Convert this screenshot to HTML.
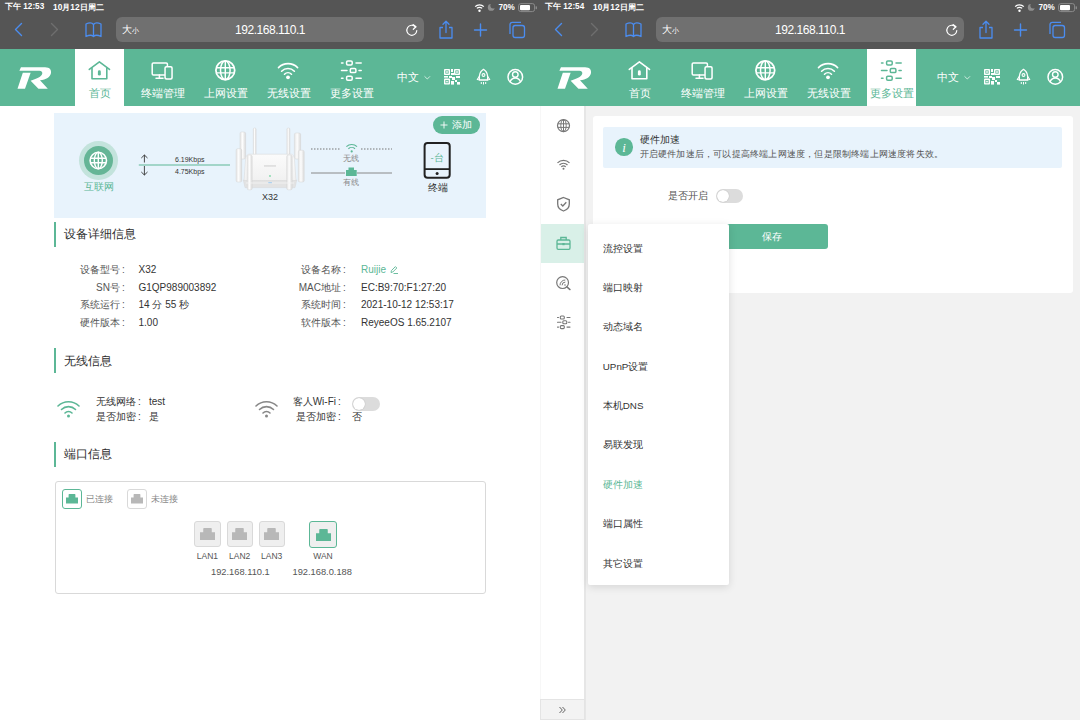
<!DOCTYPE html>
<html><head><meta charset="utf-8"><style>
.c{display:inline-block;margin-left:2px;width:4px;text-align:left}
*{margin:0;padding:0;box-sizing:border-box}
html,body{width:1080px;height:720px;overflow:hidden;background:#fff;font-family:"Liberation Sans",sans-serif}
.abs{position:absolute}
.panel{position:absolute;top:0;width:540px;height:720px;overflow:hidden;background:#fff}
.sb{position:absolute;left:0;top:0;width:540px;height:49px;background:#555555}
.st{position:absolute;font-size:8.2px;color:#fff;font-weight:bold;white-space:nowrap;line-height:10px}
.url{position:absolute;left:116px;top:17px;width:308px;height:25px;border-radius:6px;background:#707070}
.hdr{position:absolute;left:0;top:49px;width:540px;height:57px;background:#5cb796}
.hdr svg{top:6px}
.tab{position:absolute;top:0;width:49px;height:57px}
.tab.on{background:#fff}
.tab .lbl{position:absolute;left:-20px;right:-20px;top:39px;font-size:11px;line-height:11px;color:#fff;text-align:center;white-space:nowrap}
.tab.on .lbl{color:#5cb796}
.t{position:absolute;white-space:nowrap;line-height:1}
.lab{position:absolute;white-space:nowrap;line-height:1;font-size:10px;color:#555;text-align:right}
.val{position:absolute;white-space:nowrap;line-height:1;font-size:10px;color:#333}
.sec{position:absolute;left:54px;width:2px;height:25px;background:#5cb796}
.sect{position:absolute;left:64px;font-size:12.4px;line-height:1;color:#2e2e2e;white-space:nowrap}
</style></head><body>
<div class="panel" style="left:0">

<div class="sb">
  <div class="st" style="left:5px;top:2px">下午 12:53</div><div class="st" style="left:53px;top:2px;font-size:8.4px">10月12日周二</div>
  <svg class="abs" style="left:474px;top:3px" width="66" height="10" viewBox="0 0 66 10">
    <path d="M1.2,3.6 A6,6 0 0 1 9.8,3.6" stroke="#fff" stroke-width="1.3" fill="none"/>
    <path d="M2.9,5.4 A3.6,3.6 0 0 1 8.1,5.4" stroke="#fff" stroke-width="1.3" fill="none"/>
    <circle cx="5.5" cy="7.8" r="1.2" fill="#fff"/>
    <circle cx="17.2" cy="4.4" r="3.4" fill="#8f8f8f"/><circle cx="19.3" cy="2.6" r="2.9" fill="#555555"/>
  </svg>
  <div class="st" style="left:498.5px;top:3px;font-weight:bold">70%</div>
  <svg class="abs" style="left:518px;top:3px" width="20" height="10" viewBox="0 0 20 10">
    <rect x="0.6" y="0.6" width="16" height="8" rx="2.2" fill="none" stroke="#8a8a8a" stroke-width="1"/>
    <rect x="2" y="2" width="10" height="5.2" rx="1" fill="#fff"/>
    <rect x="17.6" y="3.2" width="1.4" height="3" rx="0.6" fill="#8a8a8a"/>
  </svg>
  <svg class="abs" style="left:0;top:16px" width="540" height="32" viewBox="0 0 540 32">
    <path d="M21.5,7.5 L15.5,13.5 L21.5,19.5" stroke="#4b8df0" stroke-width="1.4" fill="none" stroke-linecap="round" stroke-linejoin="round"/>
    <path d="M51.5,7.5 L57.5,13.5 L51.5,19.5" stroke="#6e6e6e" stroke-width="1.4" fill="none" stroke-linecap="round" stroke-linejoin="round"/>
    <path d="M86,8 C89,6.5 92,6.5 93.5,8.5 C95,6.5 98,6.5 101,8 L101,20.5 C98,19 95,19 93.5,20.5 C92,19 89,19 86,20.5 Z M93.5,8.5 L93.5,20.5" stroke="#4b8df0" stroke-width="1.3" fill="none" stroke-linejoin="round"/>
  </svg>
  <div class="url">
    <div class="t" style="left:6px;top:8px;font-size:10px;color:#fff">大<span style="font-size:7px">小</span></div>
    <div class="t" style="left:0;width:308px;text-align:center;top:7px;font-size:12px;color:#fff;letter-spacing:-0.45px">192.168.110.1</div>
    <svg class="abs" style="left:289px;top:6px" width="14" height="14" viewBox="0 0 14 14">
      <path d="M10.6,4 A5,5 0 1 0 11.8,7.5" stroke="#fff" stroke-width="1.2" fill="none" stroke-linecap="round"/>
      <path d="M8,1.6 L11,3.8 L8.3,6.3" stroke="#fff" stroke-width="1.2" fill="none" stroke-linecap="round" stroke-linejoin="round"/>
    </svg>
  </div>
  <svg class="abs" style="left:430px;top:16px" width="110" height="32" viewBox="0 0 110 32">
    <path d="M13,11.5 L10,11.5 L10,22 L22,22 L22,11.5 L19,11.5" stroke="#4b8df0" stroke-width="1.3" fill="none" stroke-linejoin="round"/>
    <path d="M16,16.5 L16,5.5 M13,8.3 L16,5.3 L19,8.3" stroke="#4b8df0" stroke-width="1.3" fill="none" stroke-linecap="round" stroke-linejoin="round"/>
    <path d="M50.5,8 L50.5,20 M44.5,14 L56.5,14" stroke="#4b8df0" stroke-width="1.4" fill="none" stroke-linecap="round"/>
    <rect x="83" y="9.5" width="11.5" height="12" rx="2.2" stroke="#4b8df0" stroke-width="1.3" fill="none"/>
    <path d="M80,18 L80,8.5 A2.2,2.2 0 0 1 82.2,6.3 L91,6.3" stroke="#4b8df0" stroke-width="1.3" fill="none"/>
  </svg>
</div>
<div class="hdr"><svg class="abs" style="left:10px;top:6px" width="50" height="45" viewBox="0 0 800 720">
 <path fill="#fff" d="M150,250 L175,195 L560,195 C640,195 665,240 655,290 C645,350 580,390 480,405 L605,540 L455,540 L330,410 C420,385 500,350 515,305 C525,275 505,252 470,252 Z"/>
 <path fill="#fff" d="M205,285 L330,285 L240,540 L120,540 Z"/>
</svg><div class="tab on" style="left:75px"><div class="lbl">首页</div></div><div class="tab" style="left:138px"><div class="lbl">终端管理</div></div><div class="tab" style="left:201px"><div class="lbl">上网设置</div></div><div class="tab" style="left:264px"><div class="lbl">无线设置</div></div><div class="tab" style="left:327px"><div class="lbl">更多设置</div></div></div><div class="abs" style="left:0;top:0"><svg class="abs" style="left:84px;top:56px" width="32" height="28" viewBox="84 56 32 28">
 <path d="M89.3,69.4 L99.4,61.8 L109.5,69.4" stroke="#5cb796" stroke-width="1.6" fill="none" stroke-linecap="round" stroke-linejoin="round"/>
 <path d="M92,67.5 L92,78.8 L106.8,78.8 L106.8,67.5" stroke="#5cb796" stroke-width="1.6" fill="none" stroke-linejoin="round"/>
 <rect x="97.9" y="70.2" width="2.9" height="5.4" rx="1.45" fill="#5cb796"/>
</svg><svg class="abs" style="left:140px;top:55px" width="240" height="30" viewBox="140 55 240 30">
 <rect x="152.2" y="62.9" width="15.2" height="12" rx="1.2" stroke="#fff" stroke-width="1.5" fill="none"/>
 <path d="M159.4,75 L159.4,78.3 M156,78.3 L163,78.3" stroke="#fff" stroke-width="1.5" fill="none" stroke-linecap="round"/>
 <rect x="164.3" y="65.9" width="8.5" height="13.9" rx="2" fill="#fff"/>
 <rect x="165.8" y="67.4" width="5.5" height="10.9" rx="1" fill="#5cb796"/>
 <circle cx="225.3" cy="70.3" r="9.4" stroke="#fff" stroke-width="1.8" fill="none"/>
 <ellipse cx="225.3" cy="70.3" rx="4.8" ry="9.4" stroke="#fff" stroke-width="1.5" fill="none"/>
 <path d="M225.3,61 L225.3,79.6 M216.5,67.8 L234.1,67.8 M216.5,72.9 L234.1,72.9" stroke="#fff" stroke-width="1.4" fill="none"/>
 <path d="M278.5,67.6 A13.5,13.5 0 0 1 297.6,67.6" stroke="#fff" stroke-width="1.6" fill="none" stroke-linecap="round"/>
 <path d="M281.6,71.2 A9,9 0 0 1 294.4,71.2" stroke="#fff" stroke-width="1.6" fill="none" stroke-linecap="round"/>
 <path d="M284.5,74.2 A5,5 0 0 1 291.5,74.2" stroke="#fff" stroke-width="1.6" fill="none" stroke-linecap="round"/>
 <circle cx="288" cy="77.3" r="1.9" fill="#fff"/>
 <g stroke="#fff" stroke-width="1.5" fill="none" stroke-linecap="round">
  <path d="M341.5,62.9 L343,62.9 M356,62.9 L361.2,62.9 M341.5,70.6 L347,70.6 M359,70.6 L361.2,70.6 M341.5,78.3 L343,78.3 M356,78.3 L361.2,78.3"/>
  <rect x="346.6" y="60.9" width="5.6" height="4" rx="1.2"/>
  <rect x="350.3" y="68.6" width="5.6" height="4" rx="1.2"/>
  <rect x="346.6" y="76.3" width="5.6" height="4" rx="1.2"/>
 </g>
</svg></div><div class="t" style="left:397px;top:72px;font-size:10.5px;color:#fff">中文</div><svg class="abs" style="left:420px;top:62px" width="110" height="28" viewBox="420 62 110 28">
 <path d="M424.5,76.3 L427.3,79 L430,76.3" stroke="#d8efe6" stroke-width="0.9" fill="none"/>
 <g fill="#fff">
  <rect x="444" y="69" width="6" height="6" rx="0.8"/><rect x="454" y="69" width="6" height="6" rx="0.8"/><rect x="444" y="78.6" width="6" height="6" rx="0.8"/>
 </g>
 <g fill="#5cb796">
  <rect x="445.4" y="70.4" width="3.2" height="3.2"/><rect x="455.4" y="70.4" width="3.2" height="3.2"/><rect x="445.4" y="80" width="3.2" height="3.2"/>
 </g>
 <g fill="#fff">
  <rect x="446.2" y="71.2" width="1.6" height="1.6"/><rect x="456.2" y="71.2" width="1.6" height="1.6"/><rect x="446.2" y="80.8" width="1.6" height="1.6"/>
  <rect x="451" y="69" width="2" height="3"/><rect x="451" y="73" width="3" height="2"/><rect x="444" y="76" width="4" height="1.6"/>
  <rect x="449" y="76" width="3" height="2"/><rect x="452" y="77" width="3" height="3"/><rect x="456" y="76" width="4" height="2"/>
  <rect x="451" y="81" width="3" height="3.6"/><rect x="455" y="80" width="2" height="2"/><rect x="457" y="82" width="3" height="2.6"/>
 </g>
 <path d="M483.5,69.3 C487,71.5 488.2,75.5 487.5,80 L479.5,80 C478.8,75.5 480,71.5 483.5,69.3 Z" stroke="#fff" stroke-width="1.3" fill="none" stroke-linejoin="round"/>
 <circle cx="483.5" cy="75" r="1.4" stroke="#fff" stroke-width="1.1" fill="none"/>
 <path d="M479.6,76 L477.3,79.5 L479.6,80 M487.4,76 L489.7,79.5 L487.4,80" stroke="#fff" stroke-width="1.2" fill="none" stroke-linejoin="round"/>
 <path d="M481.3,82 L481.3,84 M483.5,82 L483.5,84.5 M485.7,82 L485.7,84" stroke="#fff" stroke-width="1" fill="none"/>
 <circle cx="515.3" cy="76.9" r="7.3" stroke="#fff" stroke-width="1.5" fill="none"/>
 <circle cx="515.3" cy="74.5" r="2.8" stroke="#fff" stroke-width="1.4" fill="none"/>
 <path d="M510,82.1 C511,79 513,78 515.3,78 C517.6,78 519.6,79 520.6,82.1" stroke="#fff" stroke-width="1.4" fill="none"/>
</svg>
<div class="abs" style="left:54px;top:113px;width:432px;height:105px;background:#e8f3fc"></div><div class="abs" style="left:78.6px;top:140.9px;width:39.2px;height:39.2px;border-radius:50%;background:#c3e3dc"></div><div class="abs" style="left:83.8px;top:146px;width:29px;height:29px;border-radius:50%;background:#65b596"></div><svg class="abs" style="left:88px;top:150px" width="21" height="21" viewBox="0 0 21 21">
      <circle cx="10.3" cy="10.5" r="8.2" stroke="#fff" stroke-width="1.6" fill="none"/>
      <ellipse cx="10.3" cy="10.5" rx="4" ry="8.2" stroke="#fff" stroke-width="1.4" fill="none"/>
      <path d="M10.3,2.2 L10.3,18.8 M2.6,8.2 L18,8.2 M2.6,12.8 L18,12.8" stroke="#fff" stroke-width="1.4"/>
    </svg><div class="t" style="left:84px;top:182px;font-size:10px;color:#5cb796">互联网</div><svg class="abs" style="left:136px;top:150px" width="100" height="30" viewBox="136 150 100 30">
      <path d="M144.4,155 L144.4,162.5 M141.3,158 L144.4,155 L147.5,158" stroke="#333" stroke-width="0.9" fill="none"/>
      <path d="M144.4,166 L144.4,175 M141.3,172 L144.4,175 L147.5,172" stroke="#333" stroke-width="0.9" fill="none"/>
      <path d="M138.8,165 L230,165" stroke="#5cb796" stroke-width="1.2"/>
    </svg><div class="t" style="left:175px;top:156px;font-size:7px;color:#333">6.19Kbps</div><div class="t" style="left:175px;top:168px;font-size:7px;color:#333">4.75Kbps</div><svg class="abs" style="left:230px;top:122px" width="80" height="72" viewBox="230 122 80 72">
  <defs>
   <linearGradient id="ant" x1="0" x2="1"><stop offset="0" stop-color="#e4e4e4"/><stop offset=".45" stop-color="#fdfdfd"/><stop offset="1" stop-color="#d9d9d9"/></linearGradient>
   <linearGradient id="body" x1="0" y1="0" x2="0" y2="1"><stop offset="0" stop-color="#fbfbfb"/><stop offset="1" stop-color="#f1f1f1"/></linearGradient>
  </defs>
  <g stroke="#d6d6d6" stroke-width="0.5">
  <rect x="240" y="132" width="5.6" height="27" rx="1.5" fill="url(#ant)"/>
  <rect x="294.4" y="133" width="6.2" height="26" rx="1.5" fill="url(#ant)"/>
  <rect x="253.3" y="128" width="2.8" height="27" rx="1.2" fill="url(#ant)"/>
  <rect x="286.9" y="128" width="3" height="27" rx="1.2" fill="url(#ant)"/>
  <path d="M243.3,180 L296.7,180 L295,187.6 L245,187.6 Z" fill="#e3e3e3"/>
  <path d="M249,154.2 L291,154.2 C293,154.2 294,156 294.5,160 L296,180.5 L244,180.5 L245.5,160 C246,156 247,154.2 249,154.2 Z" fill="url(#body)"/>
  <rect x="236.1" y="148.7" width="5.6" height="33.3" rx="1.5" fill="url(#ant)"/>
  <rect x="298.3" y="150.3" width="5.9" height="31.7" rx="1.5" fill="url(#ant)"/>
  <rect x="247.2" y="155" width="5" height="34.8" rx="1.5" fill="url(#ant)"/>
  <rect x="286.7" y="155" width="5.5" height="34.8" rx="1.5" fill="url(#ant)"/>
  </g>
  <path d="M246,183 L294,183" stroke="#f5f5f5" stroke-width="0.8"/>
  <rect x="264" y="165.5" width="12" height="0.9" fill="#c9c9c9"/>
  <circle cx="270" cy="176" r="0.9" fill="#7fd9a8"/>
  <rect x="268.3" y="182.2" width="3.6" height="1" fill="#9ecbf0"/>
</svg><div class="t" style="left:262px;top:192.5px;font-size:9px;color:#333">X32</div><svg class="abs" style="left:305px;top:140px" width="95" height="50" viewBox="305 140 95 50">
      <path d="M311,149 L341,149 M361,149 L392,149" stroke="#777" stroke-width="1" stroke-dasharray="1.5,1.5"/>
      <path d="M346.4,146.6 A7.8,7.8 0 0 1 357,146.6" stroke="#5cb796" stroke-width="1.2" fill="none"/>
      <path d="M348.4,148.8 A4.8,4.8 0 0 1 355,148.8" stroke="#5cb796" stroke-width="1.2" fill="none"/>
      <circle cx="351.7" cy="151.4" r="1.1" fill="#5cb796"/>
      <path d="M311,173 L345,173 M357,173 L392,173" stroke="#888" stroke-width="1"/>
      <path d="M346,176 L346,170 L348.5,170 L348.5,167.5 L354,167.5 L354,170 L356.7,170 L356.7,176 Z" fill="#5cb796"/>
    </svg><div class="t" style="left:343px;top:155px;font-size:8px;color:#888">无线</div><div class="t" style="left:343px;top:179px;font-size:8px;color:#888">有线</div><svg class="abs" style="left:420px;top:139px" width="35" height="45" viewBox="420 139 35 45">
      <rect x="424.6" y="143" width="25.1" height="34.8" rx="3" stroke="#222" stroke-width="2" fill="none"/>
      <path d="M424.6,169.1 L449.7,169.1" stroke="#222" stroke-width="1.8"/>
      <circle cx="437.1" cy="173.6" r="1.5" fill="#222"/>
    </svg><div class="t" style="left:430.5px;top:153px;font-size:9.5px;color:#5cb796">-台</div><div class="t" style="left:427.5px;top:183px;font-size:10px;color:#333">终端</div><div class="abs" style="left:432.5px;top:116.3px;width:47px;height:17.5px;border-radius:9px;background:#5cb796"></div><svg class="abs" style="left:440px;top:121px" width="8" height="8" viewBox="0 0 8 8"><path d="M4,0.5 L4,7.5 M0.5,4 L7.5,4" stroke="#fff" stroke-width="0.9"/></svg><div class="t" style="left:452px;top:119.5px;font-size:10px;color:#fff">添加</div><div class="sec" style="top:222px"></div><div class="sect" style="top:228px">设备详细信息</div><div class="lab" style="right:414px;top:265.0px">设备型号<span class="c">:</span></div><div class="val" style="left:138.5px;top:265.0px">X32</div><div class="lab" style="right:193px;top:265.0px">设备名称<span class="c">:</span></div><div class="val" style="left:361px;top:265.0px;color:#5cb796">Ruijie</div><svg class="abs" style="left:389px;top:265.0px" width="10" height="10" viewBox="0 0 10 10"><path d="M2,7.5 L2.4,5.6 L6.4,1.6 L7.8,3 L3.8,7 Z M4.5,8.5 L9,8.5" stroke="#5cb796" stroke-width="0.9" fill="none"/></svg><div class="lab" style="right:414px;top:282.65px">SN号<span class="c">:</span></div><div class="val" style="left:138.5px;top:282.65px">G1QP989003892</div><div class="lab" style="right:193px;top:282.65px">MAC地址<span class="c">:</span></div><div class="val" style="left:361px;top:282.65px">EC:B9:70:F1:27:20</div><div class="lab" style="right:414px;top:300.3px">系统运行<span class="c">:</span></div><div class="val" style="left:138.5px;top:300.3px">14 分 55 秒</div><div class="lab" style="right:193px;top:300.3px">系统时间<span class="c">:</span></div><div class="val" style="left:361px;top:300.3px">2021-10-12 12:53:17</div><div class="lab" style="right:414px;top:317.95px">硬件版本<span class="c">:</span></div><div class="val" style="left:138.5px;top:317.95px">1.00</div><div class="lab" style="right:193px;top:317.95px">软件版本<span class="c">:</span></div><div class="val" style="left:361px;top:317.95px">ReyeeOS 1.65.2107</div><div class="sec" style="top:348px"></div><div class="sect" style="top:355px">无线信息</div><svg class="abs" style="left:56.7px;top:400px" width="23" height="18" viewBox="0 0 23 18">
      <path d="M1,6 A15,15 0 0 1 22,6" stroke="#5cb796" stroke-width="1.6" fill="none" stroke-linecap="round"/>
      <path d="M4.5,9.5 A10,10 0 0 1 18.5,9.5" stroke="#5cb796" stroke-width="1.6" fill="none" stroke-linecap="round"/>
      <path d="M8,13 A5,5 0 0 1 15,13" stroke="#5cb796" stroke-width="1.6" fill="none" stroke-linecap="round"/>
      <circle cx="11.5" cy="16" r="1.5" fill="#5cb796"/>
    </svg><svg class="abs" style="left:255px;top:400px" width="23" height="18" viewBox="0 0 23 18">
      <path d="M1,6 A15,15 0 0 1 22,6" stroke="#888" stroke-width="1.6" fill="none" stroke-linecap="round"/>
      <path d="M4.5,9.5 A10,10 0 0 1 18.5,9.5" stroke="#888" stroke-width="1.6" fill="none" stroke-linecap="round"/>
      <path d="M8,13 A5,5 0 0 1 15,13" stroke="#888" stroke-width="1.6" fill="none" stroke-linecap="round"/>
      <circle cx="11.5" cy="16" r="1.5" fill="#888"/>
    </svg><div class="lab" style="left:96px;top:397px;color:#333;text-align:left">无线网络<span class="c">:</span></div><div class="val" style="left:149px;top:397px">test</div><div class="lab" style="left:96px;top:411.5px;color:#333;text-align:left">是否加密<span class="c">:</span></div><div class="val" style="left:149px;top:411.5px">是</div><div class="lab" style="right:198px;top:396.5px;color:#333">客人Wi-Fi<span class="c">:</span></div><div class="abs" style="left:351.5px;top:396.5px;width:28.5px;height:14px;border-radius:7px;background:#dcdcdc"></div><div class="abs" style="left:352.5px;top:397.5px;width:12px;height:12px;border-radius:50%;background:#fff;box-shadow:0 0 1px rgba(0,0,0,.3)"></div><div class="lab" style="right:198px;top:411.5px;color:#333">是否加密<span class="c">:</span></div><div class="val" style="left:351.5px;top:411.5px">否</div><div class="sec" style="top:441.7px"></div><div class="sect" style="top:448px">端口信息</div><div class="abs" style="left:55px;top:481px;width:431px;height:112.5px;border:1px solid #d9d9d9;border-radius:3px"></div><div class="abs" style="left:62.1px;top:488.6px;width:19.6px;height:20px;border:1px solid #5cb796;border-radius:3px;background:#fff"></div><svg class="abs" style="left:65.9px;top:494.15000000000003px" width="12" height="9.5" viewBox="0 0 12 10" preserveAspectRatio="none"><path d="M0,10 L0,3.6 L2.6,3.6 L2.6,0.6 C2.6,0.3 2.9,0 3.2,0 L8.8,0 C9.1,0 9.4,0.3 9.4,0.6 L9.4,3.6 L12,3.6 L12,10 Z" fill="#5cb796"/></svg><div class="t" style="left:85.5px;top:494.5px;font-size:8.5px;color:#888">已连接</div><div class="abs" style="left:127.3px;top:488.6px;width:19.6px;height:20px;border:1px solid #d9d9d9;border-radius:3px;background:#fff"></div><svg class="abs" style="left:131.1px;top:494.15000000000003px" width="12" height="9.5" viewBox="0 0 12 10" preserveAspectRatio="none"><path d="M0,10 L0,3.6 L2.6,3.6 L2.6,0.6 C2.6,0.3 2.9,0 3.2,0 L8.8,0 C9.1,0 9.4,0.3 9.4,0.6 L9.4,3.6 L12,3.6 L12,10 Z" fill="#b8b8b8"/></svg><div class="t" style="left:150.5px;top:494.5px;font-size:8.5px;color:#888">未连接</div><div class="abs" style="left:194.2px;top:520.5px;width:26.4px;height:26.5px;border:1px solid #d9d9d9;border-radius:3px;background:#efefef"></div><svg class="abs" style="left:199.89999999999998px;top:528.05px" width="15" height="12" viewBox="0 0 12 10" preserveAspectRatio="none"><path d="M0,10 L0,3.6 L2.6,3.6 L2.6,0.6 C2.6,0.3 2.9,0 3.2,0 L8.8,0 C9.1,0 9.4,0.3 9.4,0.6 L9.4,3.6 L12,3.6 L12,10 Z" fill="#b8b8b8"/></svg><div class="t" style="left:189.2px;width:36.4px;text-align:center;top:551.5px;font-size:8.5px;color:#555">LAN1</div><div class="abs" style="left:226.5px;top:520.5px;width:26.4px;height:26.5px;border:1px solid #d9d9d9;border-radius:3px;background:#efefef"></div><svg class="abs" style="left:232.2px;top:528.05px" width="15" height="12" viewBox="0 0 12 10" preserveAspectRatio="none"><path d="M0,10 L0,3.6 L2.6,3.6 L2.6,0.6 C2.6,0.3 2.9,0 3.2,0 L8.8,0 C9.1,0 9.4,0.3 9.4,0.6 L9.4,3.6 L12,3.6 L12,10 Z" fill="#b8b8b8"/></svg><div class="t" style="left:221.5px;width:36.4px;text-align:center;top:551.5px;font-size:8.5px;color:#555">LAN2</div><div class="abs" style="left:258.5px;top:520.5px;width:26.4px;height:26.5px;border:1px solid #d9d9d9;border-radius:3px;background:#efefef"></div><svg class="abs" style="left:264.2px;top:528.05px" width="15" height="12" viewBox="0 0 12 10" preserveAspectRatio="none"><path d="M0,10 L0,3.6 L2.6,3.6 L2.6,0.6 C2.6,0.3 2.9,0 3.2,0 L8.8,0 C9.1,0 9.4,0.3 9.4,0.6 L9.4,3.6 L12,3.6 L12,10 Z" fill="#b8b8b8"/></svg><div class="t" style="left:253.5px;width:36.4px;text-align:center;top:551.5px;font-size:8.5px;color:#555">LAN3</div><div class="abs" style="left:309.2px;top:521px;width:27.6px;height:26.5px;border:1px solid #5cb796;border-radius:3px;background:#efefef"></div><svg class="abs" style="left:315.5px;top:528.55px" width="15" height="12" viewBox="0 0 12 10" preserveAspectRatio="none"><path d="M0,10 L0,3.6 L2.6,3.6 L2.6,0.6 C2.6,0.3 2.9,0 3.2,0 L8.8,0 C9.1,0 9.4,0.3 9.4,0.6 L9.4,3.6 L12,3.6 L12,10 Z" fill="#5cb796"/></svg><div class="t" style="left:303px;width:40px;text-align:center;top:551.5px;font-size:8.5px;color:#555">WAN</div><div class="t" style="left:211px;top:568px;font-size:9.3px;color:#555">192.168.110.1</div><div class="t" style="left:292.5px;top:568px;font-size:9.3px;color:#555">192.168.0.188</div>
</div>
<div class="panel" style="left:540px">

<div class="sb">
  <div class="st" style="left:5px;top:2px">下午 12:54</div><div class="st" style="left:53px;top:2px;font-size:8.4px">10月12日周二</div>
  <svg class="abs" style="left:474px;top:3px" width="66" height="10" viewBox="0 0 66 10">
    <path d="M1.2,3.6 A6,6 0 0 1 9.8,3.6" stroke="#fff" stroke-width="1.3" fill="none"/>
    <path d="M2.9,5.4 A3.6,3.6 0 0 1 8.1,5.4" stroke="#fff" stroke-width="1.3" fill="none"/>
    <circle cx="5.5" cy="7.8" r="1.2" fill="#fff"/>
    <circle cx="17.2" cy="4.4" r="3.4" fill="#8f8f8f"/><circle cx="19.3" cy="2.6" r="2.9" fill="#555555"/>
  </svg>
  <div class="st" style="left:498.5px;top:3px;font-weight:bold">70%</div>
  <svg class="abs" style="left:518px;top:3px" width="20" height="10" viewBox="0 0 20 10">
    <rect x="0.6" y="0.6" width="16" height="8" rx="2.2" fill="none" stroke="#8a8a8a" stroke-width="1"/>
    <rect x="2" y="2" width="10" height="5.2" rx="1" fill="#fff"/>
    <rect x="17.6" y="3.2" width="1.4" height="3" rx="0.6" fill="#8a8a8a"/>
  </svg>
  <svg class="abs" style="left:0;top:16px" width="540" height="32" viewBox="0 0 540 32">
    <path d="M21.5,7.5 L15.5,13.5 L21.5,19.5" stroke="#4b8df0" stroke-width="1.4" fill="none" stroke-linecap="round" stroke-linejoin="round"/>
    <path d="M51.5,7.5 L57.5,13.5 L51.5,19.5" stroke="#6e6e6e" stroke-width="1.4" fill="none" stroke-linecap="round" stroke-linejoin="round"/>
    <path d="M86,8 C89,6.5 92,6.5 93.5,8.5 C95,6.5 98,6.5 101,8 L101,20.5 C98,19 95,19 93.5,20.5 C92,19 89,19 86,20.5 Z M93.5,8.5 L93.5,20.5" stroke="#4b8df0" stroke-width="1.3" fill="none" stroke-linejoin="round"/>
  </svg>
  <div class="url">
    <div class="t" style="left:6px;top:8px;font-size:10px;color:#fff">大<span style="font-size:7px">小</span></div>
    <div class="t" style="left:0;width:308px;text-align:center;top:7px;font-size:12px;color:#fff;letter-spacing:-0.45px">192.168.110.1</div>
    <svg class="abs" style="left:289px;top:6px" width="14" height="14" viewBox="0 0 14 14">
      <path d="M10.6,4 A5,5 0 1 0 11.8,7.5" stroke="#fff" stroke-width="1.2" fill="none" stroke-linecap="round"/>
      <path d="M8,1.6 L11,3.8 L8.3,6.3" stroke="#fff" stroke-width="1.2" fill="none" stroke-linecap="round" stroke-linejoin="round"/>
    </svg>
  </div>
  <svg class="abs" style="left:430px;top:16px" width="110" height="32" viewBox="0 0 110 32">
    <path d="M13,11.5 L10,11.5 L10,22 L22,22 L22,11.5 L19,11.5" stroke="#4b8df0" stroke-width="1.3" fill="none" stroke-linejoin="round"/>
    <path d="M16,16.5 L16,5.5 M13,8.3 L16,5.3 L19,8.3" stroke="#4b8df0" stroke-width="1.3" fill="none" stroke-linecap="round" stroke-linejoin="round"/>
    <path d="M50.5,8 L50.5,20 M44.5,14 L56.5,14" stroke="#4b8df0" stroke-width="1.4" fill="none" stroke-linecap="round"/>
    <rect x="83" y="9.5" width="11.5" height="12" rx="2.2" stroke="#4b8df0" stroke-width="1.3" fill="none"/>
    <path d="M80,18 L80,8.5 A2.2,2.2 0 0 1 82.2,6.3 L91,6.3" stroke="#4b8df0" stroke-width="1.3" fill="none"/>
  </svg>
</div>
<div class="abs" style="left:0;top:106px;width:540px;height:614px;background:#f2f2f2"></div><div class="abs" style="left:0;top:106px;width:44px;height:615px;background:#fff;border-right:2px solid #e6e6e6;box-sizing:content-box"></div><div class="abs" style="left:0;top:105px;width:1px;height:615px;background:#f7f7f7"></div><div class="abs" style="left:0.5px;top:224.2px;width:43.5px;height:38.8px;background:#d9f0e8"></div><svg class="abs" style="left:10px;top:110px" width="28" height="225" viewBox="550 110 28 225">
 <g stroke="#777" stroke-width="1.2" fill="none">
  <circle cx="563.5" cy="125.6" r="6"/><ellipse cx="563.5" cy="125.6" rx="2.7" ry="6" stroke-width="1"/>
  <path d="M563.5,119.6 L563.5,131.6 M557.8,123.8 L569.2,123.8 M557.8,127.4 L569.2,127.4" stroke-width="1"/>
  <path d="M557.5,162.8 A8.5,8.5 0 0 1 569.5,162.8 M559.5,165 A5.5,5.5 0 0 1 567.5,165 M561.3,167 A2.8,2.8 0 0 1 565.7,167"/>
  <path d="M563.5,197.5 L569.3,199.8 L569.3,204 C569.3,207.5 566.5,210 563.5,211 C560.5,210 557.7,207.5 557.7,204 L557.7,199.8 Z" stroke-width="1.3"/>
  <path d="M560.8,204 L562.8,206 L566.3,202.3" stroke-width="1.3"/>
  <circle cx="562.6" cy="282.6" r="5.9" stroke-width="1.2"/><path d="M566.9,286.9 L570,289.6" stroke-width="1.4" stroke-linecap="round"/><path d="M560,285.3 A5.3,5.3 0 0 1 565.3,280 M562.1,285.3 A3.2,3.2 0 0 1 565.3,282.1" stroke-width="1"/><circle cx="565" cy="285" r="0.8" fill="#777" stroke="none"/>
 </g>
 <circle cx="563.5" cy="168.8" r="1" fill="#777"/>
 <g stroke="#5cb796" stroke-width="1.3" fill="none">
  <rect x="557" y="240" width="13" height="9.3" rx="1.2"/>
  <path d="M560.8,240 L560.8,237.5 L566.2,237.5 L566.2,240 M557,244 L570,244"/>
 </g>
 <rect x="562.4" y="243" width="2.2" height="2.2" fill="#5cb796"/>
 <g stroke="#777" stroke-width="1.1" fill="none" stroke-linecap="round">
  <path d="M557.5,317.5 L558.5,317.5 M567,317.5 L570,317.5 M557.5,322.3 L561,322.3 M568.5,322.3 L570,322.3 M557.5,327.1 L558.5,327.1 M567,327.1 L570,327.1"/>
  <rect x="560.3" y="316" width="4" height="3" rx="1"/><rect x="562.8" y="320.8" width="4" height="3" rx="1"/><rect x="560.3" y="325.6" width="4" height="3" rx="1"/>
 </g>
</svg><div class="abs" style="left:0;top:699px;width:45px;height:21px;background:#f3f3f3;border:1px solid #e4e4e4"></div><svg class="abs" style="left:18px;top:706px" width="9" height="8" viewBox="0 0 9 8"><path d="M1.5,1 L4.3,4 L1.5,7 M4.5,1 L7.3,4 L4.5,7" stroke="#555" stroke-width="0.9" fill="none"/></svg><div class="abs" style="left:52.5px;top:116px;width:480.5px;height:176.5px;background:#fff;border-radius:3px"></div><div class="abs" style="left:62.8px;top:127px;width:459.7px;height:41px;background:#e8f3fc;border-radius:2px"></div><div class="abs" style="left:75.3px;top:138.3px;width:17.5px;height:17.5px;border-radius:50%;background:#5cb796"></div><div class="t" style="left:75.3px;width:17.5px;text-align:center;top:140.5px;font-size:13px;color:#fff;font-family:'Liberation Serif',serif;font-style:italic">i</div><div class="t" style="left:99.7px;top:134.5px;font-size:9.8px;color:#333">硬件加速</div><div class="t" style="left:99.7px;top:150px;font-size:9.3px;letter-spacing:0.2px;color:#555">开启硬件加速后，可以提高终端上网速度，但是限制终端上网速度将失效。</div><div class="t" style="left:128px;top:190.5px;font-size:9.8px;color:#555">是否开启</div><div class="abs" style="left:175.6px;top:188.9px;width:27.7px;height:14.4px;border-radius:7.2px;background:#dcdcdc"></div><div class="abs" style="left:176.6px;top:189.9px;width:12.4px;height:12.4px;border-radius:50%;background:#fff;box-shadow:0 0 1px rgba(0,0,0,.3)"></div><div class="abs" style="left:176px;top:224.2px;width:111.8px;height:25px;background:#5cb796;border-radius:3px"></div><div class="t" style="left:176px;width:111.8px;text-align:center;top:231.5px;font-size:10px;color:#fff">保存</div><div class="abs" style="left:48.3px;top:224.2px;width:140.3px;height:361px;background:#fff;border-radius:2px;box-shadow:0 2px 8px rgba(0,0,0,.12)"></div><div class="t" style="left:62.8px;top:243.6px;font-size:9.8px;color:#333">流控设置</div><div class="t" style="left:62.8px;top:282.96999999999997px;font-size:9.8px;color:#333">端口映射</div><div class="t" style="left:62.8px;top:322.34px;font-size:9.8px;color:#333">动态域名</div><div class="t" style="left:62.8px;top:361.71px;font-size:9.8px;color:#333">UPnP设置</div><div class="t" style="left:62.8px;top:401.08px;font-size:9.8px;color:#333">本机DNS</div><div class="t" style="left:62.8px;top:440.45px;font-size:9.8px;color:#333">易联发现</div><div class="t" style="left:62.8px;top:479.81999999999994px;font-size:9.8px;color:#5cb796">硬件加速</div><div class="t" style="left:62.8px;top:519.1899999999999px;font-size:9.8px;color:#333">端口属性</div><div class="t" style="left:62.8px;top:558.56px;font-size:9.8px;color:#333">其它设置</div>
<div class="hdr"><svg class="abs" style="left:10px;top:6px" width="50" height="45" viewBox="0 0 800 720">
 <path fill="#fff" d="M150,250 L175,195 L560,195 C640,195 665,240 655,290 C645,350 580,390 480,405 L605,540 L455,540 L330,410 C420,385 500,350 515,305 C525,275 505,252 470,252 Z"/>
 <path fill="#fff" d="M205,285 L330,285 L240,540 L120,540 Z"/>
</svg><div class="tab" style="left:75px"><div class="lbl">首页</div></div><div class="tab" style="left:138px"><div class="lbl">终端管理</div></div><div class="tab" style="left:201px"><div class="lbl">上网设置</div></div><div class="tab" style="left:264px"><div class="lbl">无线设置</div></div><div class="tab on" style="left:327px"><div class="lbl">更多设置</div></div></div><div class="abs" style="left:0;top:0"><svg class="abs" style="left:84px;top:56px" width="32" height="28" viewBox="84 56 32 28">
 <path d="M89.3,69.4 L99.4,61.8 L109.5,69.4" stroke="#fff" stroke-width="1.6" fill="none" stroke-linecap="round" stroke-linejoin="round"/>
 <path d="M92,67.5 L92,78.8 L106.8,78.8 L106.8,67.5" stroke="#fff" stroke-width="1.6" fill="none" stroke-linejoin="round"/>
 <rect x="97.9" y="70.2" width="2.9" height="5.4" rx="1.45" fill="#fff"/>
</svg><svg class="abs" style="left:140px;top:55px" width="240" height="30" viewBox="140 55 240 30">
 <rect x="152.2" y="62.9" width="15.2" height="12" rx="1.2" stroke="#fff" stroke-width="1.5" fill="none"/>
 <path d="M159.4,75 L159.4,78.3 M156,78.3 L163,78.3" stroke="#fff" stroke-width="1.5" fill="none" stroke-linecap="round"/>
 <rect x="164.3" y="65.9" width="8.5" height="13.9" rx="2" fill="#fff"/>
 <rect x="165.8" y="67.4" width="5.5" height="10.9" rx="1" fill="#5cb796"/>
 <circle cx="225.3" cy="70.3" r="9.4" stroke="#fff" stroke-width="1.8" fill="none"/>
 <ellipse cx="225.3" cy="70.3" rx="4.8" ry="9.4" stroke="#fff" stroke-width="1.5" fill="none"/>
 <path d="M225.3,61 L225.3,79.6 M216.5,67.8 L234.1,67.8 M216.5,72.9 L234.1,72.9" stroke="#fff" stroke-width="1.4" fill="none"/>
 <path d="M278.5,67.6 A13.5,13.5 0 0 1 297.6,67.6" stroke="#fff" stroke-width="1.6" fill="none" stroke-linecap="round"/>
 <path d="M281.6,71.2 A9,9 0 0 1 294.4,71.2" stroke="#fff" stroke-width="1.6" fill="none" stroke-linecap="round"/>
 <path d="M284.5,74.2 A5,5 0 0 1 291.5,74.2" stroke="#fff" stroke-width="1.6" fill="none" stroke-linecap="round"/>
 <circle cx="288" cy="77.3" r="1.9" fill="#fff"/>
 <g stroke="#5cb796" stroke-width="1.5" fill="none" stroke-linecap="round">
  <path d="M341.5,62.9 L343,62.9 M356,62.9 L361.2,62.9 M341.5,70.6 L347,70.6 M359,70.6 L361.2,70.6 M341.5,78.3 L343,78.3 M356,78.3 L361.2,78.3"/>
  <rect x="346.6" y="60.9" width="5.6" height="4" rx="1.2"/>
  <rect x="350.3" y="68.6" width="5.6" height="4" rx="1.2"/>
  <rect x="346.6" y="76.3" width="5.6" height="4" rx="1.2"/>
 </g>
</svg></div><div class="t" style="left:397px;top:72px;font-size:10.5px;color:#fff">中文</div><svg class="abs" style="left:420px;top:62px" width="110" height="28" viewBox="420 62 110 28">
 <path d="M424.5,76.3 L427.3,79 L430,76.3" stroke="#d8efe6" stroke-width="0.9" fill="none"/>
 <g fill="#fff">
  <rect x="444" y="69" width="6" height="6" rx="0.8"/><rect x="454" y="69" width="6" height="6" rx="0.8"/><rect x="444" y="78.6" width="6" height="6" rx="0.8"/>
 </g>
 <g fill="#5cb796">
  <rect x="445.4" y="70.4" width="3.2" height="3.2"/><rect x="455.4" y="70.4" width="3.2" height="3.2"/><rect x="445.4" y="80" width="3.2" height="3.2"/>
 </g>
 <g fill="#fff">
  <rect x="446.2" y="71.2" width="1.6" height="1.6"/><rect x="456.2" y="71.2" width="1.6" height="1.6"/><rect x="446.2" y="80.8" width="1.6" height="1.6"/>
  <rect x="451" y="69" width="2" height="3"/><rect x="451" y="73" width="3" height="2"/><rect x="444" y="76" width="4" height="1.6"/>
  <rect x="449" y="76" width="3" height="2"/><rect x="452" y="77" width="3" height="3"/><rect x="456" y="76" width="4" height="2"/>
  <rect x="451" y="81" width="3" height="3.6"/><rect x="455" y="80" width="2" height="2"/><rect x="457" y="82" width="3" height="2.6"/>
 </g>
 <path d="M483.5,69.3 C487,71.5 488.2,75.5 487.5,80 L479.5,80 C478.8,75.5 480,71.5 483.5,69.3 Z" stroke="#fff" stroke-width="1.3" fill="none" stroke-linejoin="round"/>
 <circle cx="483.5" cy="75" r="1.4" stroke="#fff" stroke-width="1.1" fill="none"/>
 <path d="M479.6,76 L477.3,79.5 L479.6,80 M487.4,76 L489.7,79.5 L487.4,80" stroke="#fff" stroke-width="1.2" fill="none" stroke-linejoin="round"/>
 <path d="M481.3,82 L481.3,84 M483.5,82 L483.5,84.5 M485.7,82 L485.7,84" stroke="#fff" stroke-width="1" fill="none"/>
 <circle cx="515.3" cy="76.9" r="7.3" stroke="#fff" stroke-width="1.5" fill="none"/>
 <circle cx="515.3" cy="74.5" r="2.8" stroke="#fff" stroke-width="1.4" fill="none"/>
 <path d="M510,82.1 C511,79 513,78 515.3,78 C517.6,78 519.6,79 520.6,82.1" stroke="#fff" stroke-width="1.4" fill="none"/>
</svg>
</div>
</body></html>
